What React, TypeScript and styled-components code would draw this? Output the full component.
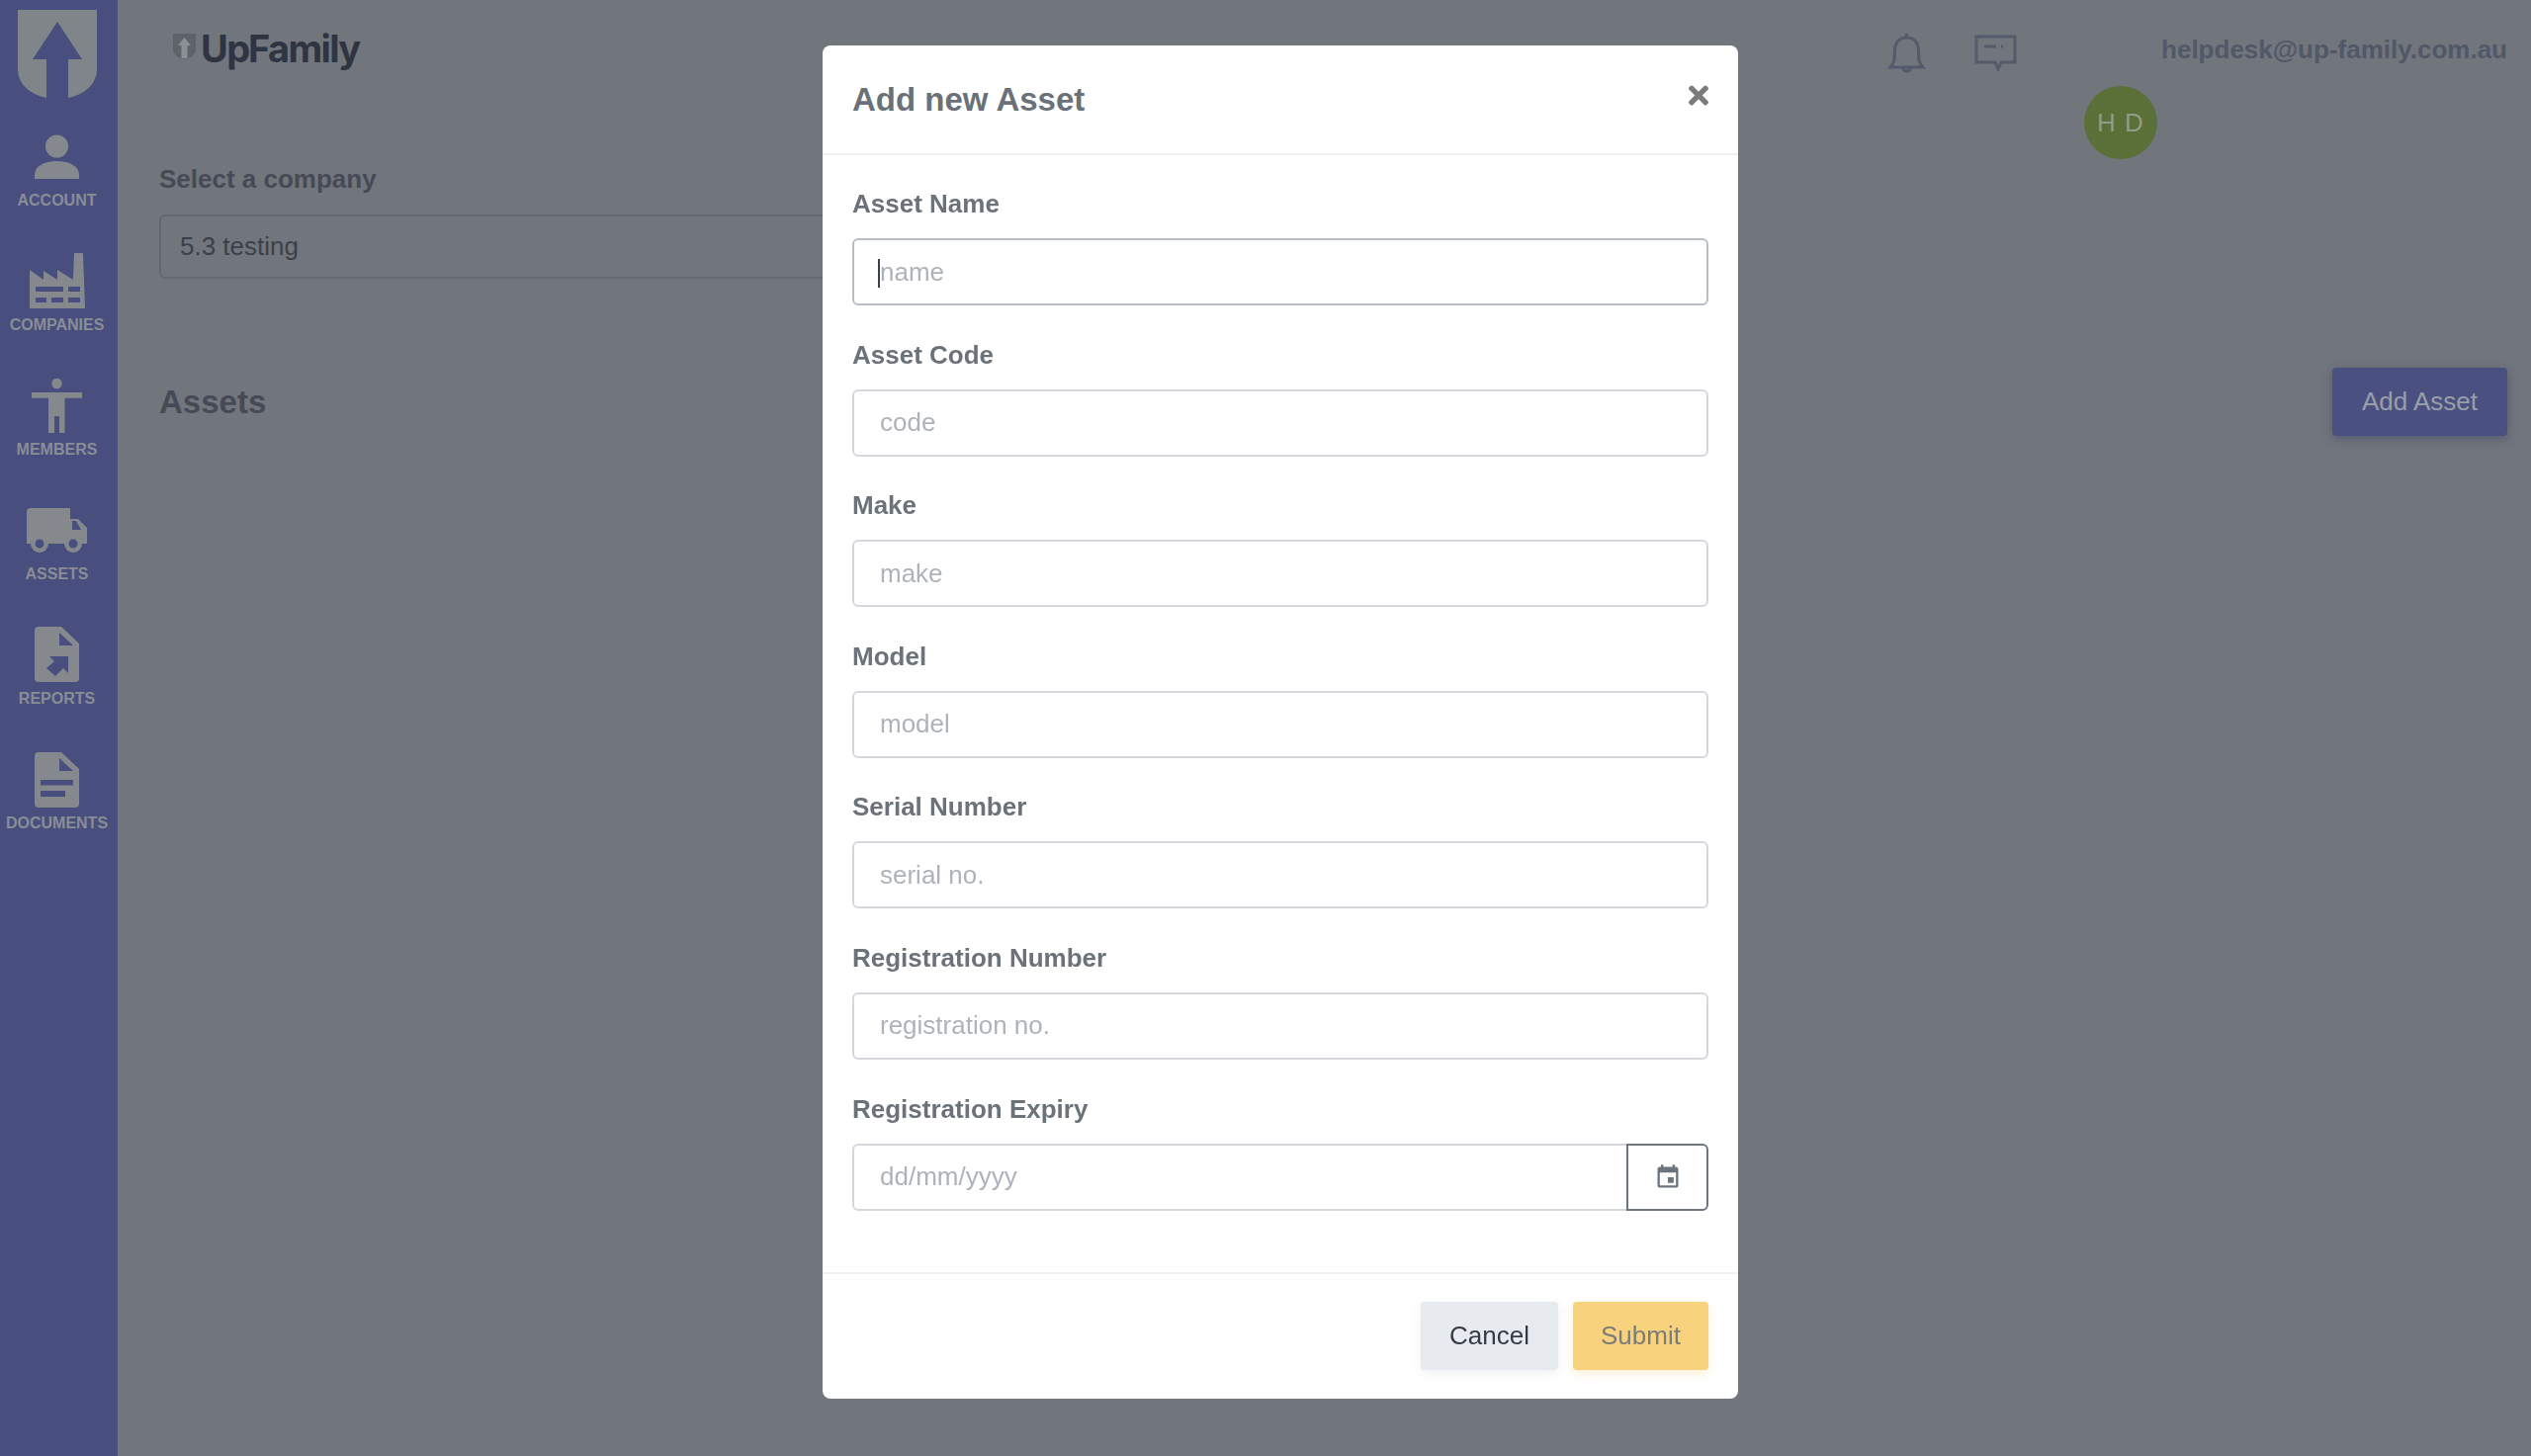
import React from 'react';
import styled, { createGlobalStyle } from 'styled-components';
import { FaTimes } from 'react-icons/fa';
import { MdEvent } from 'react-icons/md';

const GlobalStyle = createGlobalStyle`
  html, body {
    margin: 0;
    padding: 0;
    height: 100%;
    overflow: hidden;
    background: #71757c;
    font-family: "Liberation Sans", Arial, sans-serif;
  }
  * { box-sizing: border-box; }
`;

const Page = styled.div`
  display: flex;
  width: 100vw;
  height: 100vh;
`;

const Sidebar = styled.nav`
  width: 119px;
  flex: none;
  padding: 10px 4px 0 0;
  background: #484e7e;
  display: flex;
  flex-direction: column;
  align-items: center;
`;

const SideLogo = styled.svg`
  display: block;
  width: 80px;
  height: 89px;
  margin-bottom: 35px;
  fill: #80858a;
`;

const NavItem = styled.a`
  height: 126px;
  display: flex;
  flex-direction: column;
  align-items: center;
`;

const NavIcon = styled.div<{ $lift: number }>`
  height: 60px;
  display: flex;
  align-items: flex-end;
  padding-bottom: ${({ $lift }) => $lift}px;
  svg { display: block; fill: #85898e; }
`;

const NavLabel = styled.span`
  font-size: 16px;
  line-height: 18px;
  font-weight: 700;
  color: #898d96;
`;

const Main = styled.main`
  flex: 1;
  min-width: 0;
  display: flex;
  flex-direction: column;
`;

const Header = styled.header`
  height: 113px;
  padding: 30px 24px 0 56px;
  display: flex;
  justify-content: space-between;
  align-items: flex-start;
`;

const Brand = styled.div`
  display: flex;
  align-items: flex-start;
  gap: 5px;
  height: 38px;
`;

const BrandName = styled.span`
  font-family: Inter, "Liberation Sans", sans-serif;
  font-size: 38px;
  line-height: 38px;
  font-weight: 700;
  letter-spacing: -1.6px;
  word-spacing: -8px;
  color: #2f3442;
`;

const BrandMark = styled.svg`
  display: block;
  width: 23px;
  height: 26px;
  margin-top: 4px;
`;

const HeaderRight = styled.div`
  display: flex;
  flex-direction: column;
  align-items: flex-end;
`;

const HeaderRow = styled.div`
  display: flex;
  align-items: flex-start;
  height: 57px;
`;

const BellIcon = styled.svg`
  display: block;
  width: 39px;
  height: 43px;
  margin-top: 2px;
  margin-right: 49px;
  fill: none;
  stroke: #535a6a;
  stroke-width: 3;
`;

const ChatIcon = styled.svg`
  display: block;
  width: 43px;
  height: 37px;
  margin-top: 5px;
  margin-right: 146px;
  fill: none;
  stroke: #535a6a;
  stroke-width: 3;
`;

const Email = styled.span`
  font-size: 26px;
  line-height: 40px;
  font-weight: 700;
  color: #515868;
`;

const Avatar = styled.div`
  width: 74px;
  height: 74px;
  margin-right: 354px;
  border-radius: 50%;
  background: #5a7038;
  color: #8f9c88;
  font-size: 26px;
  letter-spacing: 1px;
  display: flex;
  align-items: center;
  justify-content: center;
`;

const Content = styled.section`
  padding: 48px 24px 0 42px;
`;

const CompanyLabel = styled.div`
  font-size: 26px;
  line-height: 40px;
  font-weight: 700;
  color: #454a56;
  margin-bottom: 16px;
`;

const CompanySelect = styled.div`
  width: 900px;
  height: 65px;
  padding: 0 19px;
  display: flex;
  align-items: center;
  border: 2px solid #646870;
  border-radius: 6px;
  font-size: 26px;
  color: #3b404b;
`;

const TitleRow = styled.div`
  margin-top: 90px;
  display: flex;
  justify-content: space-between;
  align-items: center;
`;

const PageTitle = styled.h2`
  margin: 0;
  font-size: 33px;
  line-height: 69px;
  font-weight: 700;
  color: #454a56;
`;

const AddButton = styled.button`
  width: 177px;
  height: 69px;
  border: 0;
  border-radius: 4px;
  background: #4a5080;
  color: #9a9ea8;
  font: 400 26px "Liberation Sans", Arial, sans-serif;
  box-shadow: 0 3px 10px rgba(60, 66, 110, 0.5);
`;

const ModalLayer = styled.div`
  position: fixed;
  inset: 0;
  padding: 46px 0 0 832px;
`;

const Modal = styled.div`
  width: 926px;
  height: 1369px;
  background: #fff;
  border-radius: 8px;
  display: flex;
  flex-direction: column;
`;

const ModalHeader = styled.div`
  height: 111px;
  flex: none;
  padding: 0 30px;
  border-bottom: 2px solid #eff0f2;
  display: flex;
  justify-content: space-between;
  align-items: flex-start;
`;

const ModalTitle = styled.h3`
  margin: 0;
  padding-top: 35px;
  font-size: 33px;
  line-height: 40px;
  font-weight: 700;
  color: #6b7178;
`;

const CloseIcon = styled(FaTimes)`
  display: block;
  width: 20px;
  height: 29px;
  margin-top: 36px;
  fill: #7b7b7b;
`;

const ModalBody = styled.form`
  flex: 1;
  padding: 30px 30px 0;
  display: flex;
  flex-direction: column;
  gap: 30.6px;
`;

const Field = styled.div`
  display: flex;
  flex-direction: column;
`;

const Label = styled.label`
  font-size: 26px;
  line-height: 39px;
  font-weight: 700;
  color: #6c727a;
  margin-bottom: 15px;
`;

const InputWrap = styled.div`
  position: relative;
  display: flex;
`;

const Input = styled.input<{ $focused?: boolean; $joined?: boolean }>`
  flex: 1;
  min-width: 0;
  height: 68px;
  padding: 0 26px;
  border: 2px solid ${({ $focused }) => ($focused ? '#b8bdc3' : '#d4d8dc')};
  border-radius: ${({ $joined }) => ($joined ? '6px 0 0 6px' : '6px')};
  background: #fff;
  outline: none;
  font: 400 26px "Liberation Sans", Arial, sans-serif;
  color: #495057;

  &::placeholder {
    color: #adb3b9;
    opacity: 1;
  }
`;

const Caret = styled.span`
  position: absolute;
  left: 26px;
  top: 21px;
  width: 2px;
  height: 29px;
  background: #3a3f4a;
`;

const CalendarButton = styled.button`
  width: 83px;
  height: 68px;
  flex: none;
  margin-left: -2px;
  padding: 0;
  border: 2px solid #6c757d;
  border-radius: 0 6px 6px 0;
  background: #fff;
  display: flex;
  align-items: center;
  justify-content: center;
  color: #6c757d;
`;

const ModalFooter = styled.div`
  height: 128px;
  flex: none;
  padding: 28px 30px 0;
  border-top: 2px solid #f0f1f3;
  display: flex;
  justify-content: flex-end;
  gap: 15px;
`;

const FooterButton = styled.button<{ $primary?: boolean }>`
  width: ${({ $primary }) => ($primary ? '137px' : '139px')};
  height: 69px;
  border: 0;
  border-radius: 4px;
  background: ${({ $primary }) => ($primary ? '#f8d27c' : '#e7eaee')};
  color: ${({ $primary }) => ($primary ? '#7c7c78' : '#343a46')};
  font: 400 26px "Liberation Sans", Arial, sans-serif;
  box-shadow: 0 3px 10px ${({ $primary }) => ($primary ? 'rgba(248, 210, 124, 0.35)' : 'rgba(200, 205, 212, 0.3)')};
`;

const SIDEBAR_BG = '#484e7e';

const UserIcon = () => (
  <svg width="45" height="45" viewBox="0 0 45 45">
    <circle cx="22.5" cy="12" r="11.5" />
    <path d="M0 45V41C0 32 10 27 22.5 27S45 32 45 41V45Z" />
  </svg>
);

const FactoryIcon = () => (
  <svg width="56" height="56" viewBox="0 0 56 56" fillRule="evenodd">
    <path d="M0 56V17L14 27V18L28 27V17L44 27L45 0H54L56 56ZM6 34V39H34V34ZM39 34V39H51V34ZM6 45V50H17V45ZM22 45V50H34V45ZM39 45V50H51V45Z" />
  </svg>
);

const MemberIcon = () => (
  <svg width="51" height="55" viewBox="0 0 51 55" fillRule="evenodd">
    <circle cx="25.5" cy="5" r="5.2" />
    <path d="M0 14H51V19.700H33.500V55H28V38H23V55H17V19.700H0Z" />
  </svg>
);

const TruckIcon = () => (
  <svg width="61" height="45" viewBox="0 0 61 45">
    <path fillRule="evenodd" d="M4 0H44V11H52L61 20V36H0V4A4 4 0 0 1 4 0ZM46 13V22H55L50 13Z" />
    <circle cx="13" cy="36" r="9" />
    <circle cx="47" cy="36" r="9" />
    <circle cx="13" cy="36" r="4.500" fill={SIDEBAR_BG} />
    <circle cx="47" cy="36" r="4.500" fill={SIDEBAR_BG} />
  </svg>
);

const ReportIcon = () => (
  <svg width="45" height="56" viewBox="0 0 45 56" fillRule="evenodd">
    <path d="M4 0H27L45 17V52A4 4 0 0 1 41 56H4A4 4 0 0 1 0 52V4A4 4 0 0 1 4 0ZM25 6V19H39ZM34 30H15L20 35L12 42L21 50L29 42L34 47Z" />
  </svg>
);

const DocumentIcon = () => (
  <svg width="45" height="56" viewBox="0 0 45 56" fillRule="evenodd">
    <path d="M4 0H27L45 17V52A4 4 0 0 1 41 56H4A4 4 0 0 1 0 52V4A4 4 0 0 1 4 0ZM25 6V19H39ZM6 28V33.500H39V28ZM6 39V45H31V39Z" />
  </svg>
);

const navItems = [
  { label: 'ACCOUNT', lift: 13, icon: <UserIcon /> },
  { label: 'COMPANIES', lift: 8, icon: <FactoryIcon /> },
  { label: 'MEMBERS', lift: 8, icon: <MemberIcon /> },
  { label: 'ASSETS', lift: 13, icon: <TruckIcon /> },
  { label: 'REPORTS', lift: 8, icon: <ReportIcon /> },
  { label: 'DOCUMENTS', lift: 7, icon: <DocumentIcon /> },
];

const fields = [
  { label: 'Asset Name', placeholder: 'name', focused: true },
  { label: 'Asset Code', placeholder: 'code' },
  { label: 'Make', placeholder: 'make' },
  { label: 'Model', placeholder: 'model' },
  { label: 'Serial Number', placeholder: 'serial no.' },
  { label: 'Registration Number', placeholder: 'registration no.' },
];

export default function App() {
  return (
    <>
      <GlobalStyle />
      <Page>
        <Sidebar>
          <SideLogo viewBox="0 0 80 89">
            <path d="M0 0H80V60C80 76 66 86 51 89V50H65L40 12L15 50H29V89C14 86 0 76 0 60Z" />
          </SideLogo>
          {navItems.map((item) => (
            <NavItem key={item.label}>
              <NavIcon $lift={item.lift}>{item.icon}</NavIcon>
              <NavLabel>{item.label}</NavLabel>
            </NavItem>
          ))}
        </Sidebar>

        <Main>
          <Header>
            <Brand>
              <BrandMark viewBox="0 0 23 26">
                <path d="M0 0H23V16C23 21 18 25 11.500 26C5 25 0 21 0 16Z" fill="#5e6269" />
                <path d="M11.500 4L18 12H14.500V25H8.500V12H5Z" fill="#8d9196" />
              </BrandMark>
              <BrandName>Up Family</BrandName>
            </Brand>
            <HeaderRight>
              <HeaderRow>
                <BellIcon viewBox="0 0 39 43">
                  <path d="M3 36H36C32 32 31.500 28 31.500 20C31.500 11 27 6 19.500 6S7.500 11 7.500 20C7.500 28 7 32 3 36Z" />
                  <path d="M19.500 2V6M15.500 36A4 4 0 0 0 23.500 36" />
                </BellIcon>
                <ChatIcon viewBox="0 0 43 37">
                  <path d="M2 2H41V28H27L24 35L21 28H2Z" />
                  <path d="M10 12H22M27 12H29" />
                </ChatIcon>
                <Email>helpdesk@up-family.com.au</Email>
              </HeaderRow>
              <Avatar>H D</Avatar>
            </HeaderRight>
          </Header>

          <Content>
            <CompanyLabel>Select a company</CompanyLabel>
            <CompanySelect>5.3 testing</CompanySelect>
            <TitleRow>
              <PageTitle>Assets</PageTitle>
              <AddButton>Add Asset</AddButton>
            </TitleRow>
          </Content>
        </Main>

        <ModalLayer>
          <Modal>
            <ModalHeader>
              <ModalTitle>Add new Asset</ModalTitle>
              <CloseIcon />
            </ModalHeader>
            <ModalBody>
              {fields.map((field) => (
                <Field key={field.label}>
                  <Label>{field.label}</Label>
                  <InputWrap>
                    <Input placeholder={field.placeholder} $focused={field.focused} readOnly />
                    {field.focused && <Caret />}
                  </InputWrap>
                </Field>
              ))}
              <Field>
                <Label>Registration Expiry</Label>
                <InputWrap>
                  <Input placeholder="dd/mm/yyyy" $joined readOnly />
                  <CalendarButton type="button">
                    <MdEvent size={28} />
                  </CalendarButton>
                </InputWrap>
              </Field>
            </ModalBody>
            <ModalFooter>
              <FooterButton type="button">Cancel</FooterButton>
              <FooterButton type="button" $primary>
                Submit
              </FooterButton>
            </ModalFooter>
          </Modal>
        </ModalLayer>
      </Page>
    </>
  );
}
